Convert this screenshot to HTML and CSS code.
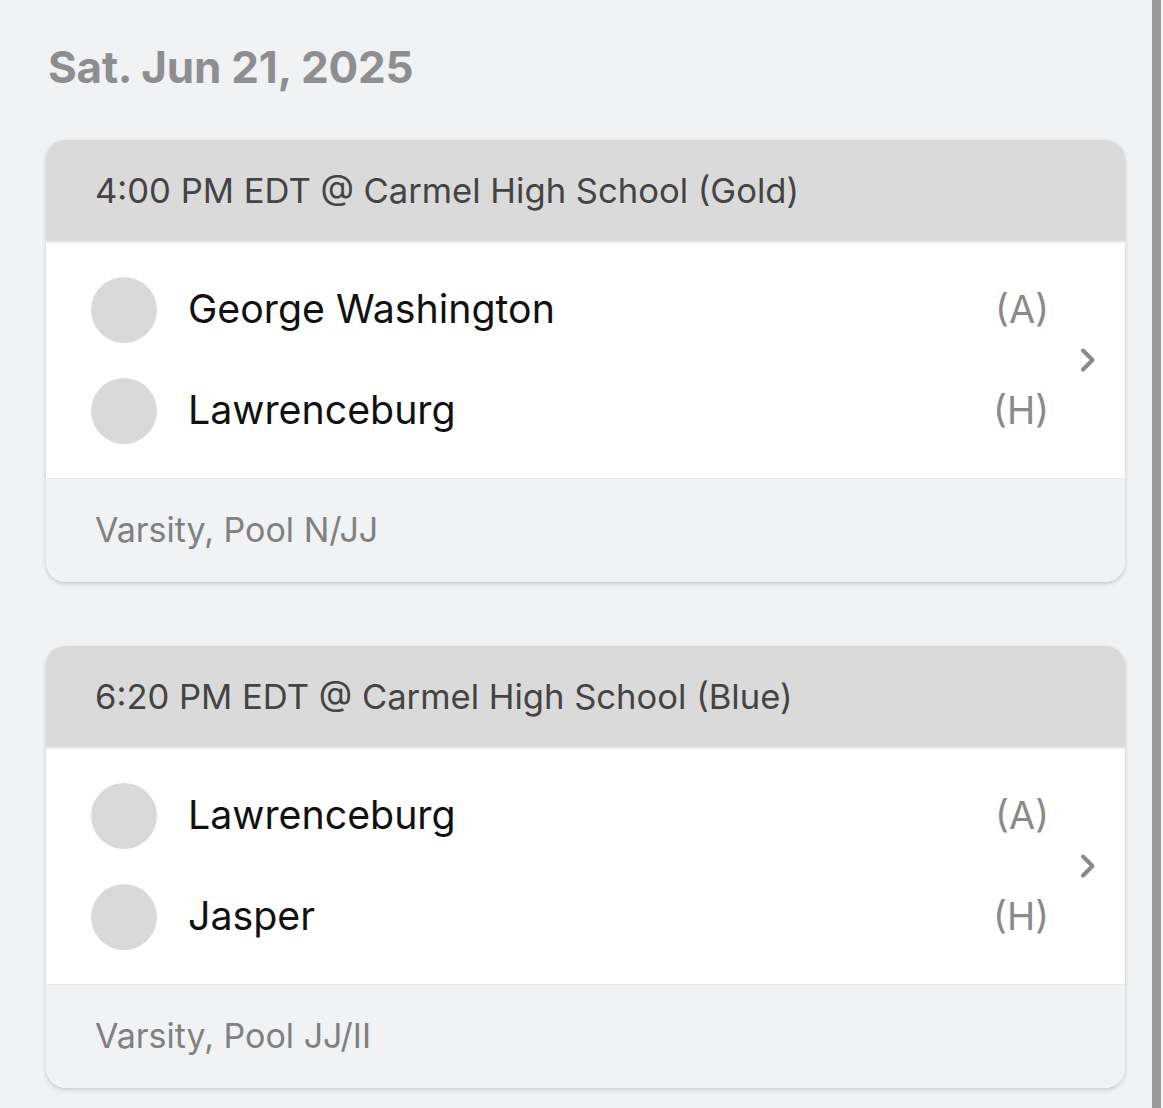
FILE: index.html
```html
<!DOCTYPE html>
<html>
<head>
<meta charset="utf-8">
<link rel="stylesheet" href="styles.css">
</head>
<body>
<div class="page">
  <main class="content">
    <h1 class="date">Sat. Jun 21, 2025</h1>

    <section class="card">
      <div class="card-head">4:00 PM EDT @ Carmel High School (Gold)</div>
      <div class="card-body">
        <div class="teams">
          <div class="team"><span class="logo"></span><span class="name">George Washington</span><span class="side">(A)</span></div>
          <div class="team"><span class="logo"></span><span class="name">Lawrenceburg</span><span class="side">(H)</span></div>
        </div>
        <svg class="chev" width="20" height="26" viewBox="0 0 20 26"><path d="M5 3.5 L14.5 13 L5 22.5" fill="none" stroke="#8a8a8a" stroke-width="4" stroke-linecap="round" stroke-linejoin="round"/></svg>
      </div>
      <div class="card-foot">Varsity, Pool N/JJ</div>
    </section>

    <section class="card">
      <div class="card-head">6:20 PM EDT @ Carmel High School (Blue)</div>
      <div class="card-body">
        <div class="teams">
          <div class="team"><span class="logo"></span><span class="name">Lawrenceburg</span><span class="side">(A)</span></div>
          <div class="team"><span class="logo"></span><span class="name">Jasper</span><span class="side">(H)</span></div>
        </div>
        <svg class="chev" width="20" height="26" viewBox="0 0 20 26"><path d="M5 3.5 L14.5 13 L5 22.5" fill="none" stroke="#8a8a8a" stroke-width="4" stroke-linecap="round" stroke-linejoin="round"/></svg>
      </div>
      <div class="card-foot">Varsity, Pool JJ/II</div>
    </section>
  </main>
  <div class="scrollbar"></div>
</div>
</body>
</html>
```
FILE: styles.css
```css
html, body {
  margin: 0;
  padding: 0;
  height: 100%;
  overflow: hidden;
}
body {
  background: #f1f2f4;
  font-family: Inter, "Noto Sans", sans-serif;
}
.page {
  display: flex;
  height: 1108px;
}
.content {
  flex: 1;
  padding: 0 27px 0 46px;
}
.scrollbar {
  width: 9px;
  margin-right: 2px;
  background: #9a9a9a;
}
.date {
  margin: 0;
  padding: 39px 0 0 2px;
  height: 100px;
  box-sizing: border-box;
  font-size: 44px;
  line-height: 56px;
  font-weight: 700;
  color: #8e8e90;
  letter-spacing: -0.2px;
}
.card {
  margin-top: 40px;
  border-radius: 20px;
  overflow: hidden;
  box-shadow: 0 2px 4px rgba(0,0,0,0.16), 0 0 1px rgba(0,0,0,0.12);
  margin-bottom: 24px;
}
.card + .card {
  margin-top: 64px;
}
.card-head {
  height: 103px;
  background: #dadada;
  border-bottom: 2px solid #ececec;
  display: flex;
  align-items: center;
  padding-left: 49px;
  padding-bottom: 2px;
  box-sizing: border-box;
  font-size: 34.6px;
  color: #444444;
}
.card-body {
  background: #ffffff;
  display: flex;
  align-items: center;
  padding: 33px 27px 34px 45px;
  height: 235px;
  box-sizing: border-box;
}
.teams {
  flex: 1;
  display: flex;
  flex-direction: column;
  gap: 35px;
}
.team {
  display: flex;
  align-items: center;
  height: 66px;
}
.logo {
  width: 66px;
  height: 66px;
  border-radius: 50%;
  background: #d9d9d9;
  flex: none;
}
.name {
  margin-left: 31px;
  flex: 1;
  font-size: 39.3px;
  color: #111111;
  padding-bottom: 2px;
}
.side {
  font-size: 38px;
  color: #8a8a8a;
  padding-bottom: 2px;
}
.chev {
  margin-left: 29px;
  flex: none;
}
.card-foot {
  height: 104px;
  background: #f1f2f4;
  border-top: 1px solid #ebebeb;
  display: flex;
  align-items: center;
  padding-left: 49px;
  padding-bottom: 3px;
  box-sizing: border-box;
  font-size: 34px;
  color: #808080;
}
```
